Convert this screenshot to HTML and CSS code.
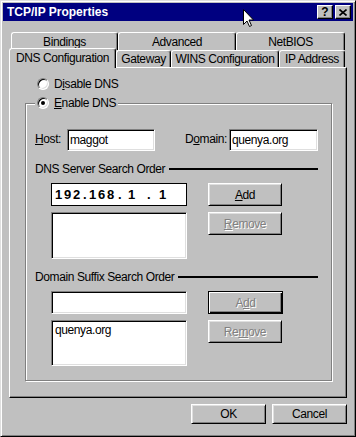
FILE: index.html
```html
<!DOCTYPE html>
<html lang="en">
<head>
  <meta charset="UTF-8">
  <title>TCP/IP Properties</title>
  <link rel="stylesheet" href="styles.css">
</head>
<body>

<div class="window">
  <div class="titlebar">
    <span class="title">TCP/IP Properties</span>
    <div class="caption-btns">
      <div class="cap help">?</div>
      <div class="cap">
        <svg width="8" height="7" viewBox="0 0 8 7"><path d="M0.5 0.5 L7.5 6.5 M7.5 0.5 L0.5 6.5" stroke="#000" stroke-width="1.6"/></svg>
      </div>
    </div>
  </div>

  <div class="tabs">
    <div class="tab-row back">
      <div class="tab" style="width: 107px;">Bindings</div>
      <div class="tab" style="width: 118px;">Advanced</div>
      <div class="tab" style="width: 109px;">NetBIOS</div>
    </div>
    <div class="tab-row front">
      <div class="tab active" style="width: 107px;">DNS Configuration</div>
      <div class="tab" style="width: 55px;">Gateway</div>
      <div class="tab" style="width: 108px;">WINS Configuration</div>
      <div class="tab" style="width: 66px;">IP Address</div>
    </div>
  </div>

  <div class="panel">
    <div class="radio-row">
      <span class="radio"></span>
      <span>D<u>i</u>sable DNS</span>
    </div>

    <div class="group">
      <div class="legend">
        <span class="radio checked"></span>
        <span><u>E</u>nable DNS</span>
      </div>

      <div class="host-row">
        <span class="lbl host-lbl"><u>H</u>ost:</span>
        <div class="edit host-edit">maggot</div>
        <span class="lbl domain-lbl">D<u>o</u>main:</span>
        <div class="edit domain-edit">quenya.org</div>
      </div>

      <div class="heading">DNS Server Search Order</div>

      <div class="field-row">
        <div class="ipbox">
          <span class="oct" style="width: 28px;">192</span>
          <span class="oct" style="width: 6px;">.</span>
          <span class="oct" style="width: 29px;">168</span>
          <span class="oct" style="width: 10px;">.</span>
          <span class="oct" style="width: 19px;">1</span>
          <span class="oct" style="width: 12px;">.</span>
          <span class="oct">1</span>
        </div>
        <div class="btn"><span><u>A</u>dd</span></div>
      </div>

      <div class="field-row list-row">
        <div class="list"></div>
        <div class="btn disabled"><span><u>R</u>emove</span></div>
      </div>

      <div class="heading">Domain Suffix Search Order</div>

      <div class="field-row">
        <div class="edit wide-edit"></div>
        <div class="btn default disabled"><span>A<u>d</u>d</span></div>
      </div>

      <div class="field-row list-row">
        <div class="list">quenya.org</div>
        <div class="btn disabled"><span>Re<u>m</u>ove</span></div>
      </div>
    </div>
  </div>

  <div class="actions">
    <div class="btn action">OK</div>
    <div class="btn action">Cancel</div>
  </div>

  <svg class="cursor" width="12" height="19" viewBox="0 0 12 19">
    <path d="M0.5 0.5 L0.5 15.5 L4 12 L6.5 17.5 L8.5 16.5 L6 11 L10.5 11 Z" fill="#fff" stroke="#000" stroke-width="1"/>
  </svg>
</div>

</body>
</html>
```

FILE: styles.css
```css
* {
  box-sizing: border-box;
}

body {
  margin: 0;
  background: #c0c0c0;
  font-family: 'Liberation Sans', Arial, sans-serif;
  font-size: 12px;
  letter-spacing: -0.4px;
  color: #000;
}

.window {
  position: relative;
  width: 356px;
  height: 437px;
  background: #c0c0c0;
  border: 1px solid;
  border-color: #dfdfdf #000 #000 #dfdfdf;
  box-shadow: inset 1px 1px #fff, inset -1px -1px #808080;
  padding: 2px;
}

.titlebar {
  height: 18px;
  background: #000080;
  color: #fff;
  display: flex;
  align-items: center;
  justify-content: space-between;
  padding: 0 2px 0 4px;
}

.title {
  font-weight: bold;
  letter-spacing: 0;
}

.caption-btns {
  display: flex;
  gap: 2px;
}

.cap {
  width: 16px;
  height: 14px;
  background: #c0c0c0;
  border: 1px solid;
  border-color: #fff #000 #000 #fff;
  box-shadow: inset -1px -1px #808080;
  display: flex;
  align-items: center;
  justify-content: center;
  color: #000;
}

.cap.help {
  font-weight: bold;
  font-size: 12px;
  letter-spacing: 0;
  line-height: 1;
}

/* tabs */
.tabs {
  margin: 11px 0 0 8px;
}

.tab-row {
  display: flex;
}

.tab-row.back {
  height: 18px;
}

.tab-row.front {
  height: 17px;
  align-items: flex-end;
}

.tab {
  height: 100%;
  background: #c0c0c0;
  border: 1px solid;
  border-color: #fff #000 transparent #fff;
  border-bottom: none;
  border-radius: 3px 3px 0 0;
  box-shadow: inset -1px 0 #808080;
  display: flex;
  align-items: center;
  justify-content: center;
  white-space: nowrap;
}

.tab.active {
  height: 20px;
  margin-left: -2px;
  margin-bottom: -1px;
  position: relative;
  z-index: 1;
  padding-bottom: 2px;
}

.panel {
  height: 331px;
  margin: 0 6px;
  border: 1px solid;
  border-color: #fff #000 #000 #fff;
  box-shadow: inset -1px -1px #808080;
  padding: 10px 14px 0 15px;
}

/* radios */
.radio-row,
.legend {
  display: flex;
  align-items: center;
  gap: 5px;
  height: 12px;
}

.radio-row {
  margin-left: 12px;
}

.radio {
  position: relative;
  width: 12px;
  height: 12px;
  border-radius: 50%;
  background: #fff;
  border: 1px solid;
  border-color: #808080 #fff #fff #808080;
  box-shadow: inset 1px 1px #000, inset -1px -1px #dfdfdf;
  flex: none;
}

.radio.checked::after {
  content: '';
  position: absolute;
  left: 3px;
  top: 3px;
  width: 4px;
  height: 4px;
  border-radius: 50%;
  background: #000;
}

.group {
  margin-top: 13px;
  border: 1px solid #808080;
  box-shadow: inset 1px 1px #fff, 1px 1px #fff;
  padding-bottom: 14px;
}

.legend {
  width: max-content;
  margin: -7px 0 0 9px;
  padding: 0 2px 0 2px;
  background: #c0c0c0;
}

/* host / domain */
.host-row {
  display: flex;
  align-items: center;
  margin-top: 20px;
  padding-left: 9px;
}

.lbl {
  margin-top: -3px;
}

.host-lbl {
  width: 32px;
}

.domain-lbl {
  width: 44px;
  margin-left: 30px;
}

.edit,
.list {
  background: #fff;
  border: 1px solid;
  border-color: #808080 #fff #fff #808080;
  box-shadow: inset 1px 1px #000, inset -1px -1px #dfdfdf;
  padding: 0 2px;
}

.edit {
  height: 22px;
  display: flex;
  align-items: center;
}

.host-edit {
  width: 88px;
}

.domain-edit {
  width: 89px;
}

.heading {
  display: flex;
  align-items: center;
  width: 283px;
  height: 14px;
  margin: 11px 0 0 9px;
}

.heading::after {
  content: '';
  flex: 1;
  height: 2px;
  margin-left: 4px;
  background: #000;
}

.field-row {
  display: flex;
  align-items: flex-start;
  gap: 21px;
  margin: 8px 0 0 25px;
}

.heading + .field-row {
  margin-top: 7px;
}

.group > .heading:nth-of-type(2) + .field-row {
  margin-top: 8px;
}

.list-row {
  margin-top: 6px;
}

.ipbox {
  width: 136px;
  height: 23px;
  background: #fff;
  border: 1px solid #000;
  display: flex;
  align-items: center;
  padding-left: 3px;
  font-weight: bold;
  font-size: 13px;
  letter-spacing: 1.8px;
}

.oct {
  flex: none;
}

.wide-edit {
  width: 136px;
  height: 23px;
}

.list {
  width: 136px;
  height: 47px;
  padding: 2px 3px;
}

.list-row:last-child .list {
  height: 46px;
}

/* buttons */
.btn {
  width: 74px;
  height: 23px;
  background: #c0c0c0;
  border: 1px solid;
  border-color: #fff #000 #000 #fff;
  box-shadow: inset 1px 1px #dfdfdf, inset -1px -1px #808080;
  display: flex;
  align-items: center;
  justify-content: center;
}

.btn.disabled {
  color: #808080;
  text-shadow: 1px 1px 0 #fff;
}

.btn.default {
  width: 75px;
  border-color: #000;
  box-shadow: inset 1px 1px #fff, inset -1px -1px #000, inset -2px -2px #808080;
}

.actions {
  display: flex;
  justify-content: flex-end;
  gap: 6px;
  margin-top: 6px;
  padding-right: 6px;
}

.btn.action {
  width: 75px;
  height: 20px;
}

.cursor {
  position: absolute;
  left: 242px;
  top: 8px;
}
```
